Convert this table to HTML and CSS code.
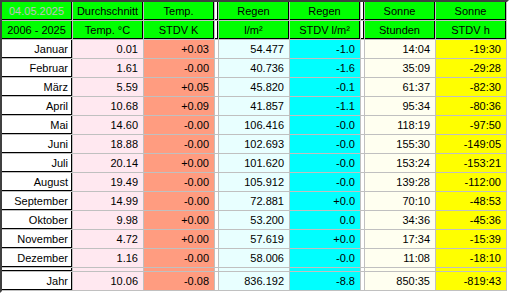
FILE: index.html
```html
<!DOCTYPE html>
<html lang="de">
<head>
<meta charset="utf-8">
<title>Klimatabelle</title>
<link rel="stylesheet" href="styles.css">
</head>
<body>
<div class="grid">
  <div class="h date">04.05.2025</div><div class="h">Durchschnitt</div><div class="h">Temp.</div><div class="h sp"></div><div class="h">Regen</div><div class="h">Regen</div><div class="h sp"></div><div class="h">Sonne</div><div class="h">Sonne</div>
  <div class="h">2006 - 2025</div><div class="h">Temp. °C</div><div class="h">STDV K</div><div class="h sp"></div><div class="h">l/m²</div><div class="h">STDV l/m²</div><div class="h sp"></div><div class="h">Stunden</div><div class="h">STDV h</div>

  <div class="lbl">Januar</div><div class="c c1">0.01</div><div class="c c2">+0.03</div><div class="sp"></div><div class="c c3">54.477</div><div class="c c4">-1.0</div><div class="sp"></div><div class="c c5">14:04</div><div class="c c6">-19:30</div>
  <div class="lbl">Februar</div><div class="c c1">1.61</div><div class="c c2">-0.00</div><div class="sp"></div><div class="c c3">40.736</div><div class="c c4">-1.6</div><div class="sp"></div><div class="c c5">35:09</div><div class="c c6">-29:28</div>
  <div class="lbl">März</div><div class="c c1">5.59</div><div class="c c2">+0.05</div><div class="sp"></div><div class="c c3">45.820</div><div class="c c4">-0.1</div><div class="sp"></div><div class="c c5">61:37</div><div class="c c6">-82:30</div>
  <div class="lbl">April</div><div class="c c1">10.68</div><div class="c c2">+0.09</div><div class="sp"></div><div class="c c3">41.857</div><div class="c c4">-1.1</div><div class="sp"></div><div class="c c5">95:34</div><div class="c c6">-80:36</div>
  <div class="lbl">Mai</div><div class="c c1">14.60</div><div class="c c2">-0.00</div><div class="sp"></div><div class="c c3">106.416</div><div class="c c4">-0.0</div><div class="sp"></div><div class="c c5">118:19</div><div class="c c6">-97:50</div>
  <div class="lbl">Juni</div><div class="c c1">18.88</div><div class="c c2">-0.00</div><div class="sp"></div><div class="c c3">102.693</div><div class="c c4">-0.0</div><div class="sp"></div><div class="c c5">155:30</div><div class="c c6">-149:05</div>
  <div class="lbl">Juli</div><div class="c c1">20.14</div><div class="c c2">+0.00</div><div class="sp"></div><div class="c c3">101.620</div><div class="c c4">-0.0</div><div class="sp"></div><div class="c c5">153:24</div><div class="c c6">-153:21</div>
  <div class="lbl">August</div><div class="c c1">19.49</div><div class="c c2">-0.00</div><div class="sp"></div><div class="c c3">105.912</div><div class="c c4">-0.0</div><div class="sp"></div><div class="c c5">139:28</div><div class="c c6">-112:00</div>
  <div class="lbl">September</div><div class="c c1">14.99</div><div class="c c2">-0.00</div><div class="sp"></div><div class="c c3">72.881</div><div class="c c4">+0.0</div><div class="sp"></div><div class="c c5">70:10</div><div class="c c6">-48:53</div>
  <div class="lbl">Oktober</div><div class="c c1">9.98</div><div class="c c2">+0.00</div><div class="sp"></div><div class="c c3">53.200</div><div class="c c4">0.0</div><div class="sp"></div><div class="c c5">34:36</div><div class="c c6">-45:36</div>
  <div class="lbl">November</div><div class="c c1">4.72</div><div class="c c2">+0.00</div><div class="sp"></div><div class="c c3">57.619</div><div class="c c4">+0.0</div><div class="sp"></div><div class="c c5">17:34</div><div class="c c6">-15:39</div>
  <div class="lbl">Dezember</div><div class="c c1">1.16</div><div class="c c2">-0.00</div><div class="sp"></div><div class="c c3">58.006</div><div class="c c4">-0.0</div><div class="sp"></div><div class="c c5">11:08</div><div class="c c6">-18:10</div>

  <div class="lbl"></div><div class="c1"></div><div class="c2"></div><div class="sp"></div><div class="c3"></div><div class="c4"></div><div class="sp"></div><div class="c5"></div><div class="c6"></div>

  <div class="lbl">Jahr</div><div class="c c1">10.06</div><div class="c c2">-0.08</div><div class="sp"></div><div class="c c3">836.192</div><div class="c c4">-8.8</div><div class="sp"></div><div class="c c5">850:35</div><div class="c c6">-819:43</div>
</div>
</body>
</html>
```

FILE: styles.css
```css
html, body {
  margin: 0;
  padding: 0;
  background: #d4d0c8;
}

body {
  font-family: "Liberation Sans", Arial, sans-serif;
  font-size: 11px;
  color: #000;
}

.grid {
  display: grid;
  grid-template-columns: 70px 70px 70px 3px 70px 70px 3px 70px 70px;
  grid-template-rows: repeat(14, 18px) 3px 18px;
  gap: 1px;
  width: 509px;
  height: 293px;
  box-sizing: border-box;
  padding: 0 1px 1px 0;
  background: #c0c0c0;
  border-style: solid;
  border-width: 2px;
  border-color: #404040 #ffffff #ffffff #404040;
}

.grid > div {
  box-sizing: border-box;
  display: flex;
  align-items: center;
  white-space: nowrap;
  overflow: hidden;
}

.h {
  background: #00ff00;
  border-right: 1px solid #000;
  border-bottom: 1px solid #000;
  justify-content: center;
}

.h.date {
  color: #c0c0c0;
}

.lbl {
  background: #ffffff;
  border-right: 1px solid #000;
  border-bottom: 1px solid #000;
  justify-content: flex-end;
  padding-right: 3px;
}

.c {
  justify-content: flex-end;
  padding-right: 5px;
}

.sp { background: #ffffff; }
.c1 { background: #ffe8f0; }
.c2 { background: #ff9c80; }
.c3 { background: #e8ffff; }
.c4 { background: #00ffff; }
.c5 { background: #fffff0; }
.c6 { background: #ffff00; }
```
